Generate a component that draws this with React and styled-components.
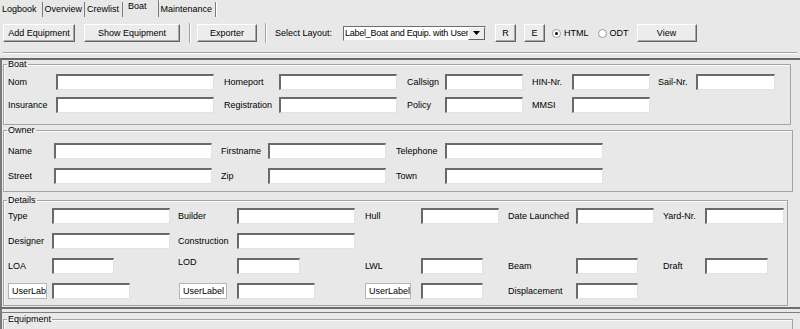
import React from "react";
import styled, { createGlobalStyle } from "styled-components";

const Global = createGlobalStyle`
    html, body { margin: 0; padding: 0; background: #e8e8e8; }
`;

const Root = styled.div`
    width: 800px;
    height: 329px;
    overflow: hidden;
    background: #e8e8e8;
    font-family: "Liberation Sans", Arial, sans-serif;
    font-size: 9px;
    color: #000;
`;

const TabBar = styled.div`
    display: flex;
    align-items: flex-end;
    height: 17px;
    padding-left: 1px;
`;

const Tab = styled.div`
    height: ${props => (props.$active ? 17 : 15)}px;
    line-height: ${props => (props.$active ? 13 : 15)}px;
    padding: 0 ${props => props.$pad}px 0 ${props => props.$lp || 2}px;
    border-right: 1px solid #7c7c7c;
    box-shadow: 1px 0 0 #fff;
    background: #e8e8e8;
    white-space: nowrap;
`;

const Toolbar = styled.div`
    display: flex;
    align-items: center;
    height: 32px;
    padding-left: 3px;
`;

const Button = styled.button`
    font: inherit;
    width: ${props => props.$w}px;
    height: 18px;
    margin-left: ${props => props.$ml || 0}px;
    padding: 0;
    background: #ececec;
    border: 1px solid;
    border-color: #fff #646464 #646464 #fff;
    box-shadow: inset -1px -1px 0 #a8a8a8;
    color: #000;
`;

const VSep = styled.div`
    width: 1px;
    height: 20px;
    margin-left: ${props => props.$ml}px;
    background: #a0a0a0;
    box-shadow: 1px 0 0 #fff;
`;

const ToolLabel = styled.span`
    margin-left: ${props => props.$ml}px;
    white-space: nowrap;
`;

const Combo = styled.div`
    display: flex;
    width: 143px;
    height: 15px;
    margin-left: 11px;
    background: #fff;
    border: 1px solid;
    border-color: #6e6e6e #e6e6e6 #e6e6e6 #6e6e6e;
    box-sizing: border-box;
`;

const ComboText = styled.div`
    flex: 1;
    overflow: hidden;
    white-space: nowrap;
    line-height: 13px;
    padding-left: 1px;
    letter-spacing: -0.25px;
`;

const ComboArrow = styled.div`
    width: 15px;
    display: flex;
    align-items: center;
    justify-content: center;
    background: #ececec;
    border: 1px solid;
    border-color: #fff #646464 #646464 #fff;
`;

const Radio = styled.span`
    display: inline-flex;
    align-items: center;
    justify-content: center;
    width: 9px;
    height: 9px;
    margin-left: ${props => props.$ml}px;
    border-radius: 50%;
    background: #fff;
    border: 1px solid #9a9a9a;
    box-sizing: border-box;
    &::after {
        content: "";
        display: ${props => (props.$on ? "block" : "none")};
        width: 3px;
        height: 3px;
        border-radius: 50%;
        background: #000;
    }
`;

const HLine = styled.div`
    height: 1px;
    margin: 3px 3px 4px 3px;
    background: #a0a0a0;
    border-bottom: 1px solid #fff;
`;

const Pane = styled.div`
    border-top: 2px solid #6a6a6a;
    border-left: 2px solid #7a7a7a;
    padding: 0 8px 0 1px;
`;

const Group = styled.fieldset`
    margin: 0;
    padding: ${props => props.$pt}px 0 ${props => props.$pb}px 4px;
    min-width: 0;
    border: 1px solid #a3a3a3;
    box-shadow: inset 1px 1px 0 #fafafa;
    margin-bottom: ${props => props.$mb || 0}px;
    width: ${props => props.$w}px;
    box-sizing: border-box;
`;

const Legend = styled.legend`
    padding: 0 1px;
    margin-left: -1px;
    line-height: 9px;
`;

const Grid = styled.div`
    display: grid;
    grid-template-columns: ${props => props.$cols};
    grid-auto-rows: 16px;
    row-gap: ${props => props.$gap}px;
    align-items: center;
`;

const Label = styled.span`
    white-space: nowrap;
    position: relative;
    top: ${props => (props.$raise ? -4 : 0)}px;
`;

const Field = styled.div`
    width: ${props => props.$w}px;
    height: 16px;
    box-sizing: border-box;
    margin-left: ${props => props.$ml || 0}px;
    background: #fff;
    border: 1px solid;
    border-top: 2px solid #6a6a6a;
    border-left: 2px solid #6a6a6a;
    border-color: #6a6a6a #e2e2e2 #e2e2e2 #6a6a6a;
    overflow: hidden;
    white-space: nowrap;
    line-height: 13px;
    padding-left: 2px;
`;

const UserField = styled(Field)`
    border: 1px solid #b4b4b4;
    line-height: 14px;
    padding-left: 3px;
`;

const Divider = styled.div`
    height: 3px;
    margin: 1px 0 2px -3px;
    width: 812px;
    border-top: 2px solid #6e6e6e;
    border-bottom: 1px solid #7e7e7e;
`;

const Cell = ({ c }) => {
    if (!c) return <span />;
    if (c.user) return <UserField $w={c.user} $ml={c.ml}>UserLabel</UserField>;
    if (c.label) return <Label $raise={c.raise}>{c.label}</Label>;
    return <Field $w={c.w} />;
};

const groups = [
    {
        title: "Boat",
        cols: "48px 168px 55px 128px 38px 87px 40px 86px 38px 79px",
        gap: 7,
        pt: 5,
        pb: 11,
        w: 788,
        rows: [
            [{ label: "Nom" }, { w: 158 }, { label: "Homeport" }, { w: 118 }, { label: "Callsign" }, { w: 78 }, { label: "HIN-Nr." }, { w: 78 }, { label: "Sail-Nr." }, { w: 79 }],
            [{ label: "Insurance" }, { w: 158 }, { label: "Registration" }, { w: 118 }, { label: "Policy" }, { w: 78 }, { label: "MMSI" }, { w: 78 }],
        ],
    },
    {
        title: "Owner",
        cols: "46px 167px 47px 128px 49px 158px",
        gap: 9,
        pt: 8,
        pb: 7,
        w: 790,
        rows: [
            [{ label: "Name" }, { w: 158 }, { label: "Firstname" }, { w: 118 }, { label: "Telephone" }, { w: 158 }],
            [{ label: "Street" }, { w: 158 }, { label: "Zip" }, { w: 118 }, { label: "Town" }, { w: 158 }],
        ],
    },
    {
        title: "Details",
        cols: "44px 126px 59px 128px 56px 87px 68px 87px 42px 79px",
        gap: 9,
        pt: 3,
        pb: 6,
        w: 785,
        rows: [
            [{ label: "Type" }, { w: 118 }, { label: "Builder" }, { w: 118 }, { label: "Hull" }, { w: 78 }, { label: "Date Launched" }, { w: 78 }, { label: "Yard-Nr." }, { w: 79 }],
            [{ label: "Designer" }, { w: 118 }, { label: "Construction" }, { w: 118 }],
            [{ label: "LOA" }, { w: 62 }, { label: "LOD", raise: true }, { w: 63 }, { label: "LWL" }, { w: 62 }, { label: "Beam" }, { w: 62 }, { label: "Draft" }, { w: 63 }],
            [{ user: 39 }, { w: 78 }, { user: 48, ml: 1 }, { w: 78 }, { user: 46 }, { w: 62 }, { label: "Displacement" }, { w: 62 }],
        ],
    },
];

const FormGroup = ({ g, mb }) => (
    <Group $pt={g.pt} $pb={g.pb} $w={g.w} $mb={mb}>
        <Legend>{g.title}</Legend>
        <Grid $cols={g.cols} $gap={g.gap}>
            {g.rows.map((row, r) => {
                const cells = [...row];
                while (cells.length < g.cols.split(" ").length) cells.push(null);
                return cells.map((c, i) => <Cell key={`${r}-${i}`} c={c} />);
            })}
        </Grid>
    </Group>
);

export default function App() {
    return (
        <Root>
            <Global />
            <TabBar>
                <Tab $pad={5} $lp={1}>Logbook</Tab>
                <Tab $pad={2}>Overview</Tab>
                <Tab $pad={3}>Crewlist</Tab>
                <Tab $active $pad={11} $lp={5}>Boat</Tab>
                <Tab $pad={3}>Maintenance</Tab>
            </TabBar>
            <Toolbar>
                <Button $w={72}>Add Equipment</Button>
                <Button $w={96} $ml={9}>Show Equipment</Button>
                <VSep $ml={9} />
                <Button $w={60} $ml={7}>Exporter</Button>
                <VSep $ml={8} />
                <ToolLabel $ml={9}>Select Layout:</ToolLabel>
                <Combo>
                    <ComboText>Label_Boat and Equip. with UserLabel</ComboText>
                    <ComboArrow>
                        <svg width="7" height="4" viewBox="0 0 7 4">
                            <path d="M0 0h7L3.5 4z" fill="#000" />
                        </svg>
                    </ComboArrow>
                </Combo>
                <Button $w={21} $ml={9}>R</Button>
                <Button $w={21} $ml={8}>E</Button>
                <Radio $on $ml={7} />
                <ToolLabel $ml={3}>HTML</ToolLabel>
                <Radio $ml={9} />
                <ToolLabel $ml={3}>ODT</ToolLabel>
                <Button $w={60} $ml={8}>View</Button>
            </Toolbar>
            <HLine />
            <Pane>
                <FormGroup g={groups[0]} mb={1} />
                <FormGroup g={groups[1]} mb={4} />
                <FormGroup g={groups[2]} />
                <Divider />
                <Group $pt={10} $pb={10} $w={790}>
                    <Legend>Equipment</Legend>
                </Group>
            </Pane>
        </Root>
    );
}
